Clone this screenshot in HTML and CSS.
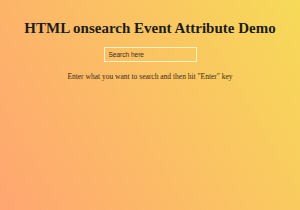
FILE: index.html
```html
<!DOCTYPE html>
<html lang="en">
<head>
    <meta charset="UTF-8">
    <meta name="viewport" content="width=device-width, initial-scale=1.0">
    <title>HTML onsearch Event Attribute</title>
    <link rel="stylesheet" href="styles.css">
</head>
<body>
    <div class="demo">
        <h1>HTML onsearch Event Attribute Demo</h1>
        <input type="search" class="szukaj" placeholder="Search here" onsearch="szukaj()">
        <p class="info">Enter what you want to search and then hit "Enter" key</p>
    </div>
    <script>
        function szukaj()
        {
            const pole = document.querySelector('.szukaj')
            document.querySelector('.info').textContent = 'You searched for: ' + pole.value
        }
    </script>
</body>
</html>
```

FILE: styles.css
```css
html
{
    height: 100%;
}
body
{
    margin: 0;
    min-height: 100%;
    background: linear-gradient(60deg, #ffa571, #f7da58);
    font-family: "Liberation Serif", "Times New Roman", serif;
    color: #1c1c1c;
}
.demo
{
    display: flex;
    flex-direction: column;
    align-items: center;
    padding-top: 20px;
}
h1
{
    font-size: 15px;
    margin: 0 0 10px;
}
.szukaj
{
    width: 93px;
    height: 15px;
    box-sizing: border-box;
    border: 1px solid #fff3c4;
    background: transparent;
    padding: 0 4px;
    font-family: "Liberation Sans", Arial, sans-serif;
    font-size: 6.5px;
    outline: none;
}
.szukaj::placeholder
{
    color: #3a2a1a;
}
.info
{
    font-size: 7.5px;
    margin: 9.5px 0 0;
    color: #3b2b18;
}
```
